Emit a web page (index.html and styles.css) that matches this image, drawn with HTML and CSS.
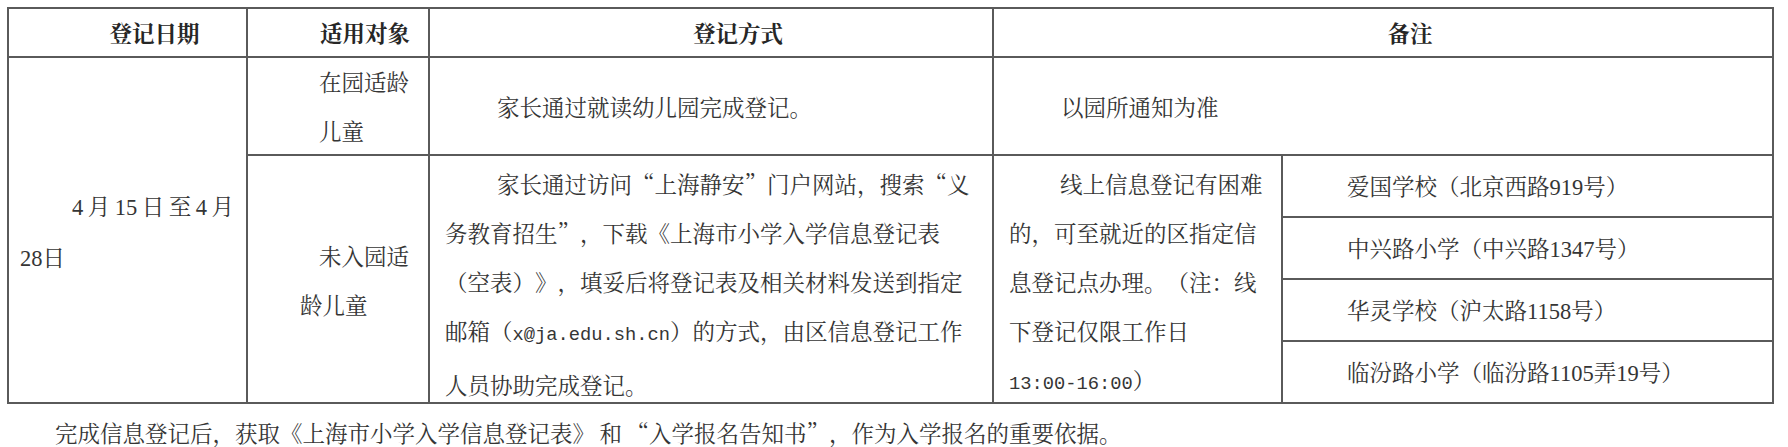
FILE: index.html
```html
<!DOCTYPE html>
<html lang="zh-CN">
<head>
<meta charset="utf-8">
<title>登记信息</title>
<link rel="stylesheet" href="styles.css">
</head>
<body>
<div class="table">
  <div class="cell head">登记日期</div>
  <div class="cell head">适用对象</div>
  <div class="cell head">登记方式</div>
  <div class="cell head span2">备注</div>

  <div class="cell date"><p><span class="num">4</span>&#8201;月&#8201;<span class="num">15</span>&#8201;日&#8201;至&#8201;<span class="num">4</span>&#8201;月<br><span class="num">28</span>日</p></div>

  <div class="cell target1"><p>在园适龄<br>儿童</p></div>
  <div class="cell method1"><p>家长通过就读幼儿园完成登记。</p></div>
  <div class="cell remark1 span2"><p>以园所通知为准</p></div>

  <div class="cell target2"><p>未入园适<br>龄儿童</p></div>
  <div class="cell method2"><p>家长通过访问“上海静安”门户网站，搜索“义<br>务教育招生”，下载《上海市小学入学信息登记表<br>（空表）》，填妥后将登记表及相关材料发送到指定<br>邮箱（<span class="mono">x@ja.edu.sh.cn</span>）的方式，由区信息登记工作<br>人员协助完成登记。</p></div>
  <div class="cell remark2"><p>线上信息登记有困难<br>的，可至就近的区指定信<br>息登记点办理。（注：线<br>下登记仅限工作日<br><span class="mono">13:00-16:00</span>）</p></div>

  <div class="cell school s1"><p>爱国学校（北京西路<span class="num">919</span>号）</p></div>
  <div class="cell school s2"><p>中兴路小学（中兴路<span class="num">1347</span>号）</p></div>
  <div class="cell school s3"><p>华灵学校（沪太路<span class="num">1158</span>号）</p></div>
  <div class="cell school s4"><p>临汾路小学（临汾路<span class="num">1105</span>弄<span class="num">19</span>号）</p></div>
</div>
<p class="note">完成信息登记后，获取《上海市小学入学信息登记表》&#8201;和&#8201;“入学报名告知书”，作为入学报名的重要依据。</p>
</body>
</html>
```

FILE: styles.css
```css
html, body {
  margin: 0;
  overflow: hidden;
  background: #fff;
}

body {
  padding: 7px 0 0 7px;
  font-family: "Noto Serif CJK SC", "Source Han Serif SC", "AR PL UMing CN", "Noto Sans CJK SC", serif;
  font-size: 22.5px;
  color: #353535;
  text-spacing-trim: space-all;
}

.table {
  display: grid;
  grid-template-columns: 237px 180px 562px 287px 489px;
  grid-template-rows: 47px 96px 60px 60px 60px 60px;
  gap: 2px;
  padding: 2px;
  width: max-content;
  background: #5a5a5a;
}

.cell {
  background: #fff;
  display: flex;
  flex-direction: column;
  justify-content: center;
  line-height: 49px;
  white-space: nowrap;
  min-width: 0;
}

.cell p {
  margin: 0;
}

.span2 {
  grid-column: 4 / 6;
}

.head {
  padding-left: 54px;
  text-align: center;
  font-weight: 700;
  color: #262626;
  line-height: 47px;
}

.date {
  grid-column: 1;
  grid-row: 2 / 7;
  padding: 4px 0 0 11px;
}

.date p {
  text-indent: 52px;
}

.target1 {
  grid-column: 2;
  grid-row: 2;
  padding-left: 71px;
}

.method1 {
  grid-column: 3;
  grid-row: 2;
  padding-left: 15px;
}

.method1 p,
.remark1 p {
  text-indent: 52px;
}

.remark1 {
  grid-row: 2;
  padding-left: 15px;
}

.target2 {
  grid-column: 2;
  grid-row: 3 / 7;
  padding: 2px 0 0 52px;
}

.target2 p {
  text-indent: 19px;
}

.method2 {
  grid-column: 3;
  grid-row: 3 / 7;
  justify-content: flex-start;
  padding: 3px 0 0 15px;
}

.method2 p {
  text-indent: 52px;
}

.remark2 {
  grid-column: 4;
  grid-row: 3 / 7;
  justify-content: flex-start;
  padding: 3px 0 0 15px;
}

.remark2 p {
  text-indent: 51px;
}

.school {
  grid-column: 5;
  padding-left: 64px;
}

.s1 { grid-row: 3; }
.s2 { grid-row: 4; }
.s3 { grid-row: 5; }
.s4 { grid-row: 6; }

.num {
  font-family: "Liberation Serif", "Times New Roman", serif;
}

.mono {
  font-family: "Liberation Mono", "Courier New", monospace;
  font-size: 18.75px;
}

.note {
  margin: 13px 0 0 48px;
  line-height: 30px;
  white-space: nowrap;
}
```
